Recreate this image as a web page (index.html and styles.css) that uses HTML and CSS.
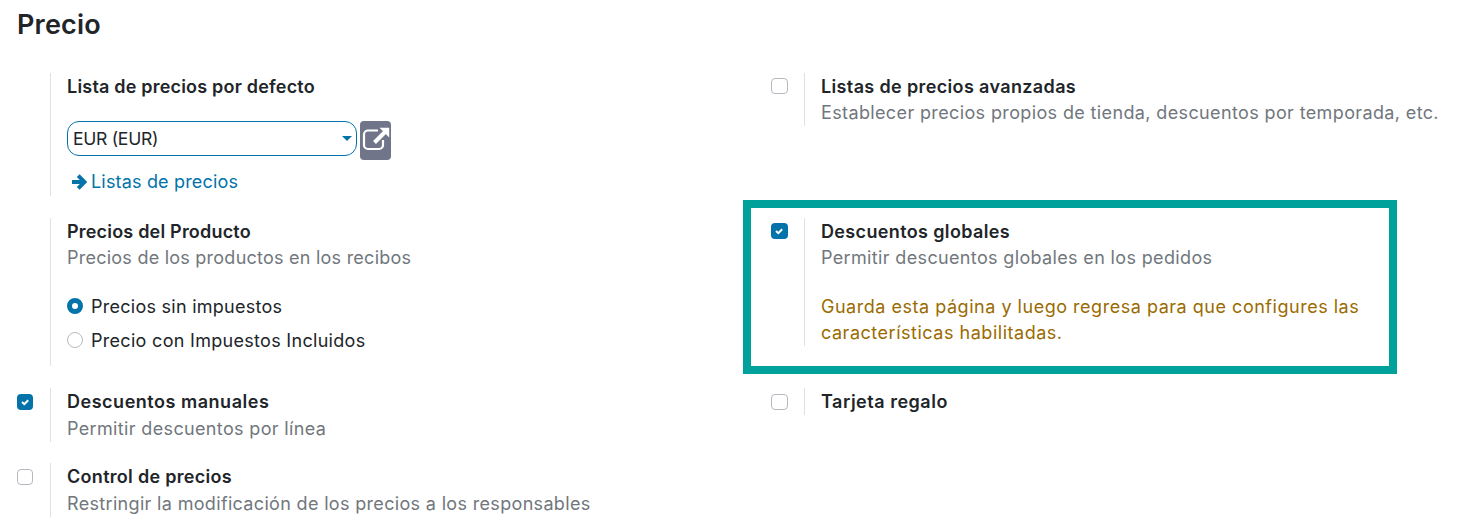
FILE: index.html
```html
<!DOCTYPE html>
<html lang="es">
<head>
<meta charset="utf-8">
<title>Precio</title>
<link rel="stylesheet" href="styles.css">
</head>
<body>
<main class="settings">
  <h2 class="heading">Precio</h2>
  <div class="grid">
    <section class="setting">
      <div class="toggle"></div>
      <div class="body">
        <div class="title track-20">Lista de precios por defecto</div>
        <div class="picker">
          <div class="select"><span class="value">EUR (EUR)</span><span class="caret"></span></div>
          <button class="external" aria-label="Abrir">
            <svg viewBox="0 0 31 39" width="31" height="39"><path d="M18 9.500H8a4 4 0 0 0-4 4V24a4 4 0 0 0 4 4h11a4 4 0 0 0 4-4V19" fill="none" stroke="#fff" stroke-width="2.2"/><path d="M14.500 21.500L25.500 10.500" stroke="#fff" stroke-width="4" fill="none"/><path d="M19.500 6.800H29.200V16.500z" fill="#fff"/></svg>
          </button>
        </div>
        <a class="link track-17"><svg viewBox="0 0 16 16" width="16" height="16"><path d="M1 8H13M7.200 1.700L13.400 8L7.200 14.300" fill="none" stroke="#0373aa" stroke-width="3.900"/></svg><span>Listas de precios</span></a>
      </div>
    </section>
    <section class="setting">
      <div class="toggle"><span class="check wide"></span></div>
      <div class="body">
        <div class="title track-36">Listas de precios avanzadas</div>
        <div class="muted track-37">Establecer precios propios de tienda, descuentos por temporada, etc.</div>
      </div>
    </section>
    <section class="setting stretch">
      <div class="toggle"></div>
      <div class="body">
        <div class="title track-20">Precios del Producto</div>
        <div class="muted track-24">Precios de los productos en los recibos</div>
        <div class="radios">
          <div class="option track-26"><span class="radio on"></span><span class="label">Precios sin impuestos</span></div>
          <div class="option track-30"><span class="radio"></span><span class="label">Precio con Impuestos Incluidos</span></div>
        </div>
      </div>
    </section>
    <section class="setting highlighted">
      <div class="toggle"><span class="check wide on"><svg viewBox="0 0 16 16" width="16" height="16"><path d="M5 8L7.300 10.200L11.200 6.200" fill="none" stroke="#fff" stroke-width="2"/></svg></span></div>
      <div class="body">
        <div class="title track-36">Descuentos globales</div>
        <div class="muted track-35">Permitir descuentos globales en los pedidos</div>
        <div class="warning track-52">Guarda esta página y luego regresa para que configures las<br>características habilitadas.</div>
      </div>
    </section>
    <section class="setting low">
      <div class="toggle"><span class="check on"><svg viewBox="0 0 16 16" width="16" height="16"><path d="M5 8L7.300 10.200L11.200 6.200" fill="none" stroke="#fff" stroke-width="2"/></svg></span></div>
      <div class="body">
        <div class="title track-52">Descuentos manuales</div>
        <div class="muted track-35">Permitir descuentos por línea</div>
      </div>
    </section>
    <section class="setting low">
      <div class="toggle"><span class="check wide"></span></div>
      <div class="body">
        <div class="title track-52">Tarjeta regalo</div>
      </div>
    </section>
    <section class="setting low">
      <div class="toggle"><span class="check"></span></div>
      <div class="body">
        <div class="title track-30">Control de precios</div>
        <div class="muted track-33">Restringir la modificación de los precios a los responsables</div>
      </div>
    </section>
  </div>
</main>
</body>
</html>
```
FILE: styles.css
```css
*, *::after { box-sizing: border-box; }
body { margin: 0; width: 1459px; height: 522px; overflow: hidden; background: #fff; color: #212529; font: 18px/26px Inter, sans-serif; }
.settings { padding: 8px 0 0 17px; }
.heading { margin: 0; font-size: 27px; line-height: 34px; font-weight: 600; letter-spacing: 0.2px; }
.grid { display: grid; grid-template-columns: 754px 688px; grid-template-rows: 123px 148px 53px 54px; row-gap: 22px; padding-top: 31px; align-items: start; }
.setting { display: flex; position: relative; }
.setting.stretch { align-self: stretch; }
.toggle { width: 33px; padding-top: 5px; flex: none; }
.low .toggle { padding-top: 6px; }
.body { flex: 1; border-left: 1px solid #dee2e6; padding-left: 16px; white-space: nowrap; }
.title { font-weight: 600; line-height: 27px; }
.muted { color: #71777d; }
.low .muted { padding-top: 1px; }
.track-17 { letter-spacing: 0.17px; }
.track-20 { letter-spacing: 0.2px; }
.track-24 { letter-spacing: 0.24px; }
.track-26 { letter-spacing: 0.26px; }
.track-30 { letter-spacing: 0.3px; }
.track-33 { letter-spacing: 0.33px; }
.track-35 { letter-spacing: 0.35px; }
.track-36 { letter-spacing: 0.36px; }
.track-37 { letter-spacing: 0.37px; }
.track-52 { letter-spacing: 0.52px; }
.picker { display: flex; gap: 3px; padding-top: 21px; }
.select { display: flex; align-items: center; justify-content: space-between; width: 290px; height: 35px; border: 1px solid #0373aa; border-radius: 12px; padding: 0 4px 0 5px; }
.value { font-size: 17.6px; letter-spacing: -0.3px; }
.caret { border: 5px solid transparent; border-top-color: #0373aa; border-bottom: 0; }
.external { width: 31px; height: 39px; padding: 0; border: 0; border-radius: 4px; background: #71758a; }
.external svg { display: block; }
.link { display: flex; align-items: center; gap: 4px; color: #0373aa; padding: 9px 0 1px 4px; }
.radios { padding-top: 22px; }
.option { display: flex; gap: 8px; height: 26px; margin-bottom: 8px; align-items: center; }
.option + .option { margin-bottom: 0; }
.label { padding-top: 2px; }
.radio { width: 16px; height: 16px; border: 1px solid #b5b9bf; border-radius: 50%; }
.radio.on { border: 5px solid #0373aa; }
.check { display: block; width: 16px; height: 16px; border: 1px solid #b5b9bf; border-radius: 4px; }
.check.wide { width: 17px; }
.check.on { background: #0373aa; border: 0; }
.check svg { display: block; }
.warning { color: #9a6b01; padding-top: 23px; }
.highlighted::after { content: ""; position: absolute; left: -28px; top: -18px; width: 654px; height: 174px; border: 8px solid #00a09b; }
```
